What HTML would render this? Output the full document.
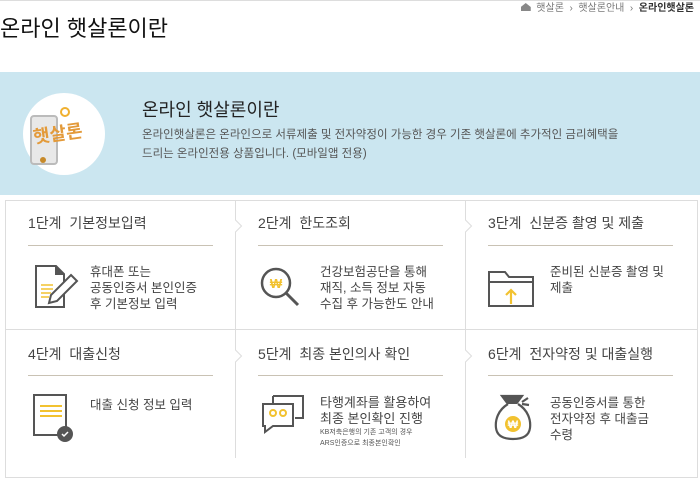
<!DOCTYPE html>
<html><head><meta charset="utf-8"><style>
*{margin:0;padding:0;box-sizing:border-box}
body{width:700px;height:480px;overflow:hidden;background:#fff;font-family:"Liberation Sans","Noto Sans CJK KR",sans-serif;color:#333;position:relative}
.a{position:absolute}
.t{font-size:14px;color:#444;white-space:nowrap}
.d{font-size:12.5px;color:#444;line-height:16px;white-space:nowrap}
.ul{height:1px;background:#c9c2b4;width:185px}
.vl{width:1px;background:#ddd}
</style></head><body>
<div class="a" style="left:0;top:0;width:700px;height:1px;background:#ddd"></div>
<div class="a" style="right:6px;top:-1px;font-size:10px;color:#777;white-space:nowrap"><span style="display:inline-block;width:10px;height:8px;background:#888;clip-path:polygon(50% 0,100% 50%,100% 100%,0 100%,0 50%)"></span>&nbsp; 햇살론 &nbsp;›&nbsp; 햇살론안내 &nbsp;›&nbsp; <b style="color:#333">온라인햇살론</b></div>
<div class="a" style="left:0;top:11px;font-size:22px;color:#111">온라인 햇살론이란</div>
<div class="a" style="left:0;top:72px;width:700px;height:123px;background:#cbe6f0"></div>
<div class="a" style="left:23px;top:93px;width:82px;height:82px;border-radius:50%;background:#fff"></div>
<div class="a" style="left:30px;top:115px;width:28px;height:50px;border:2px solid #bbb;border-radius:4px;background:#e8e8e8"></div>
<div class="a" style="left:40px;top:157px;width:6px;height:6px;border-radius:50%;background:#c78a2a"></div>
<div class="a" style="left:60px;top:107px;width:10px;height:10px;border-radius:50%;border:2px solid #f0b030"></div>
<div class="a" style="left:33px;top:124px;font-size:18px;color:#e39a3a;font-weight:bold;line-height:20px;transform:rotate(-8deg)">햇살론</div>
<div class="a" style="left:142px;top:96px;font-size:18px;color:#222">온라인 햇살론이란</div>
<div class="a d" style="left:142px;top:126px;font-size:11.5px;color:#555;line-height:19px">온라인햇살론은 온라인으로 서류제출 및 전자약정이 가능한 경우 기존 햇살론에 추가적인 금리혜택을<br>드리는 온라인전용 상품입니다. (모바일앱 전용)</div>

<div class="a" style="left:5px;top:200px;width:693px;height:278px;border:1px solid #ddd"></div>
<div class="a" style="left:6px;top:329px;width:691px;height:1px;background:#ddd"></div>
<div class="a vl" style="left:235px;top:201px;height:257px"></div>
<div class="a vl" style="left:465px;top:201px;height:257px"></div>
<svg class="a" style="left:234px;top:218px" width="10" height="16"><rect x="0" y="0" width="4" height="16" fill="#fff"/><polyline points="1.5,0 1.5,2 7.5,8 1.5,14 1.5,16" fill="none" stroke="#ddd"/></svg>
<svg class="a" style="left:464px;top:218px" width="10" height="16"><rect x="0" y="0" width="4" height="16" fill="#fff"/><polyline points="1.5,0 1.5,2 7.5,8 1.5,14 1.5,16" fill="none" stroke="#ddd"/></svg>
<svg class="a" style="left:234px;top:348px" width="10" height="16"><rect x="0" y="0" width="4" height="16" fill="#fff"/><polyline points="1.5,0 1.5,2 7.5,8 1.5,14 1.5,16" fill="none" stroke="#ddd"/></svg>
<svg class="a" style="left:464px;top:348px" width="10" height="16"><rect x="0" y="0" width="4" height="16" fill="#fff"/><polyline points="1.5,0 1.5,2 7.5,8 1.5,14 1.5,16" fill="none" stroke="#ddd"/></svg>

<!-- row 1 -->
<div class="a t" style="left:28px;top:213px">1단계 &nbsp;기본정보입력</div>
<div class="a ul" style="left:28px;top:245px"></div>
<svg class="a" style="left:33px;top:263px" width="48" height="48" viewBox="0 0 48 48" fill="none" stroke="#555" stroke-width="2"><path d="M3 3h20l8 8v33H3z"/><path d="M23 3v8h8" fill="#555"/><path d="M8 22h12M8 26h12M8 30h10M8 34h8" stroke="#f2c230" stroke-width="1.5"/><path d="M38 12l6 6-20 20-8 2 2-8z" fill="#fff"/></svg>
<div class="a d" style="left:90px;top:264px">휴대폰 또는<br>공동인증서 본인인증<br>후 기본정보 입력</div>

<div class="a t" style="left:258px;top:213px">2단계 &nbsp;한도조회</div>
<div class="a ul" style="left:258px;top:245px"></div>
<svg class="a" style="left:258px;top:265px" width="46" height="46" viewBox="0 0 46 46" fill="none" stroke="#555" stroke-width="2.5"><circle cx="18" cy="18" r="14"/><path d="M28 28l12 12" stroke-width="3"/><text x="18" y="23" font-size="13" fill="#f2c230" stroke="none" text-anchor="middle" font-family="Liberation Sans" font-weight="bold">₩</text></svg>
<div class="a d" style="left:320px;top:264px">건강보험공단을 통해<br>재직, 소득 정보 자동<br>수집 후 가능한도 안내</div>

<div class="a t" style="left:488px;top:213px">3단계 &nbsp;신분증 촬영 및 제출</div>
<div class="a ul" style="left:488px;top:245px"></div>
<svg class="a" style="left:487px;top:268px" width="48" height="40" viewBox="0 0 48 40" fill="none" stroke="#555" stroke-width="2"><path d="M2 4h16l4 5h24v29H2z"/><path d="M2 14h44"/><path d="M24 36V22M19 27l5-5 5 5" stroke="#f2c230" stroke-width="2.2"/></svg>
<div class="a d" style="left:550px;top:264px">준비된 신분증 촬영 및<br>제출</div>

<!-- row 2 -->
<div class="a t" style="left:28px;top:344px">4단계 &nbsp;대출신청</div>
<div class="a ul" style="left:28px;top:375px"></div>
<svg class="a" style="left:31px;top:392px" width="44" height="50" viewBox="0 0 44 50" fill="none" stroke="#555" stroke-width="2"><path d="M3 3h32v40H3z"/><path d="M9 14h22M9 19h22M9 24h22" stroke="#f2c230" stroke-width="2"/><circle cx="34" cy="42" r="7" fill="#555"/><path d="M31 42l2 2 4-4" stroke="#fff" stroke-width="1.5"/></svg>
<div class="a d" style="left:90px;top:397px">대출 신청 정보 입력</div>

<div class="a t" style="left:258px;top:344px">5단계 &nbsp;최종 본인의사 확인</div>
<div class="a ul" style="left:258px;top:375px"></div>
<svg class="a" style="left:261px;top:394px" width="46" height="42" viewBox="0 0 46 42" fill="none" stroke="#555" stroke-width="2"><path d="M12 2h30v22h-8M12 2v8"/><path d="M2 10h30v22H12l-8 6v-6H2z" fill="#fff"/><circle cx="12" cy="19" r="3" stroke="#f2c230"/><circle cx="22" cy="19" r="3" stroke="#f2c230"/></svg>
<div class="a d" style="left:320px;top:395px;font-size:13px">타행계좌를 활용하여<br>최종 본인확인 진행</div>
<div class="a" style="left:320px;top:427px;font-size:7px;color:#555;line-height:11px;white-space:nowrap">KB저축은행의 기존 고객의 경우<br>ARS인증으로 최종본인확인</div>

<div class="a t" style="left:488px;top:344px">6단계 &nbsp;전자약정 및 대출실행</div>
<div class="a ul" style="left:488px;top:375px"></div>
<svg class="a" style="left:492px;top:392px" width="44" height="50" viewBox="0 0 44 50" fill="none" stroke="#555" stroke-width="2.2"><path d="M10 4h20l-6 8h-8z" fill="#555"/><path d="M16 12C6 18 3 28 4 36c1 8 8 11 17 11s16-3 17-11c1-8-2-18-12-24" fill="#fff"/><path d="M30 10l6-4M30 12l7 1"/><circle cx="21" cy="32" r="8" fill="#f2c230" stroke="none"/><text x="21" y="36" font-size="11" fill="#fff" stroke="none" text-anchor="middle" font-family="Liberation Sans" font-weight="bold">₩</text></svg>
<div class="a d" style="left:550px;top:395px">공동인증서를 통한<br>전자약정 후 대출금<br>수령</div>
</body></html>
